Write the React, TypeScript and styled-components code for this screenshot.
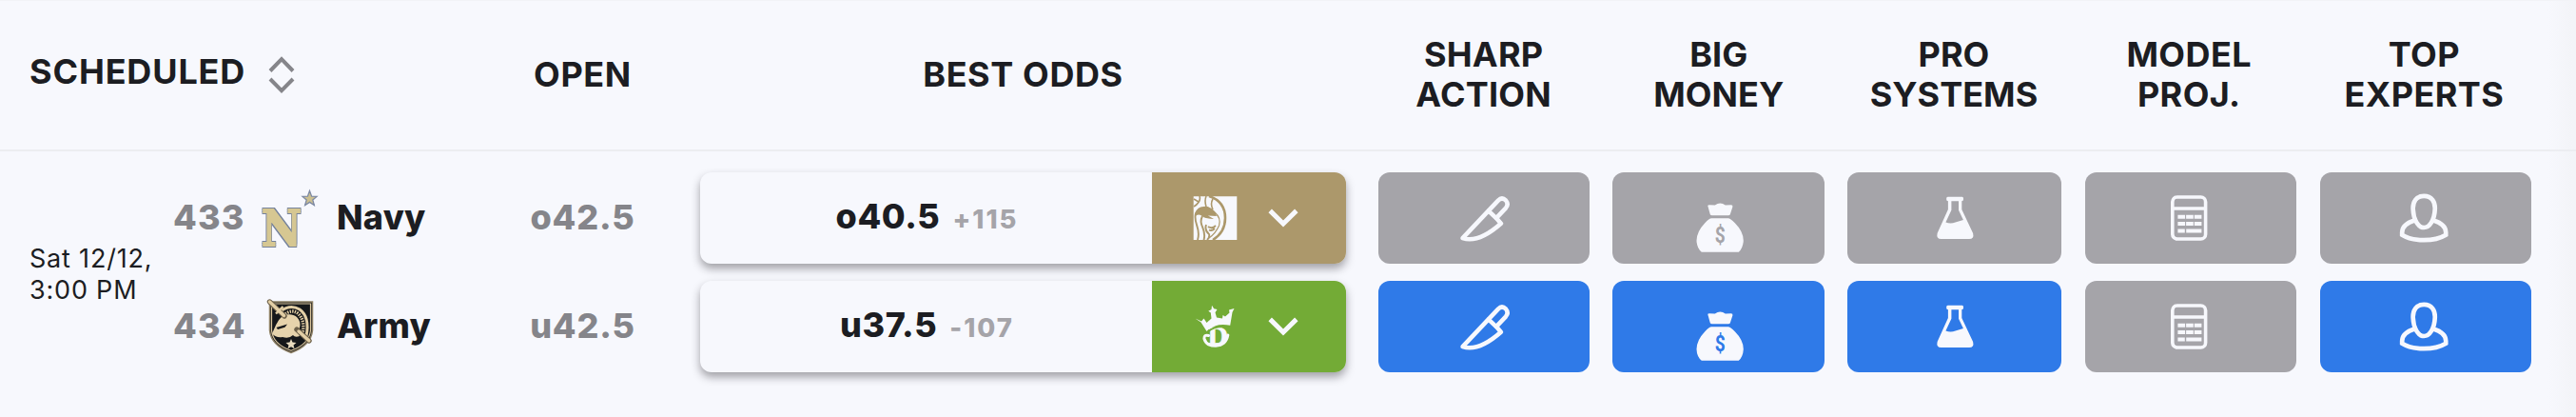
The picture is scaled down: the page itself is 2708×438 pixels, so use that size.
import React from "react";
import styled, { createGlobalStyle } from "styled-components";

const ink = "#1c1d22";
const surface = "#f7f8fd";
const muted = "#a5a4a9";
const blue = "#2f7ae8";
const bookGold = "#ac986b";
const bookGreen = "#73ab36";
const headerColumns = "183px 327px 205px 721px repeat(5, 247.2px) 1fr";
const bodyColumns = "183px 327px 205px 721px 246.8px 246.9px 249.4px 247px 247px 1fr";

const GlobalStyle = createGlobalStyle`
  * { box-sizing: border-box; }
  body {
    margin: 0;
    background: ${surface};
    font-family: Inter, "Liberation Sans", sans-serif;
    color: ${ink};
  }
  svg { display: block; flex: none; overflow: visible; }
`;

const Page = styled.main`
  width: 2708px;
  height: 438px;
  overflow: hidden;
  border-top: 1px solid #f2f3f7;
  background: linear-gradient(90deg, ${surface} 2678px, #f3f4f8 2704px);
`;

const HeaderRow = styled.header`
  display: grid;
  grid-template-columns: ${headerColumns};
  align-items: center;
  height: 158px;
  padding-bottom: 2px;
  border-bottom: 2px solid #ecedf1;
`;

const HeaderCell = styled.div<{ $spacing?: number }>`
  text-align: center;
  font-size: 36px;
  font-weight: 700;
  line-height: 42px;
  letter-spacing: ${(p) => p.$spacing ?? 0.6}px;
  white-space: pre-line;
`;

const ScheduledCell = styled(HeaderCell)`
  grid-column: span 2;
  display: flex;
  align-items: center;
  gap: 24px;
  padding: 0 0 6px 31px;
`;

const SortIconBox = styled.span`
  margin-top: 6px;
`;

const Body = styled.section`
  display: grid;
  grid-template-columns: ${bodyColumns};
  grid-template-rows: 95.5px 96px;
  row-gap: 18.5px;
  align-items: center;
  padding-top: 22px;
`;

const Time = styled.div`
  grid-row: span 2;
  grid-column: 1;
  padding: 3px 0 0 31px;
  font-size: 27px;
  line-height: 33px;
  letter-spacing: 0.8px;
  white-space: pre;
`;

const Team = styled.div`
  grid-column: 2;
  display: flex;
  align-items: center;
  font-size: 36px;
  font-weight: 800;
`;

const Rotation = styled.span`
  width: 90px;
  margin-left: -1px;
  padding-bottom: 2px;
  color: #85858a;
  letter-spacing: 1.1px;
`;

const LogoBox = styled.span`
  width: 82px;
`;

const TeamName = styled.span`
  padding-bottom: 2px;
  letter-spacing: 0.3px;
`;

const OpenLine = styled.div`
  padding-bottom: 2px;
  text-align: center;
  font-size: 36px;
  font-weight: 800;
  color: #85858a;
  letter-spacing: 0.8px;
`;

const OddsBox = styled.div`
  display: flex;
  height: 100%;
  margin: 0 21px;
  border-radius: 12px;
  overflow: hidden;
  background: ${surface};
  box-shadow: 0 5px 10px rgba(30, 28, 36, 0.4);
`;

const OddsValue = styled.div`
  flex: 1;
  display: flex;
  align-items: baseline;
  justify-content: center;
  gap: 13px;
  padding-left: 2px;
  line-height: 93px;
`;

const Line = styled.span`
  font-size: 36px;
  font-weight: 800;
  letter-spacing: 0.6px;
`;

const Price = styled.span`
  font-size: 27.5px;
  font-weight: 800;
  letter-spacing: 2px;
  color: ${muted};
`;

const Book = styled.div<{ $color: string }>`
  width: 204px;
  display: flex;
  align-items: center;
  gap: 32px;
  padding-left: 43px;
  background: ${(p) => p.$color};
`;

const Signal = styled.div<{ $active: boolean }>`
  display: flex;
  align-items: center;
  justify-content: center;
  height: 100%;
  margin: 0 12px 0 12.6px;
  border-radius: 12px;
  background: ${(p) => (p.$active ? blue : muted)};
`;

const NavyBox = styled.span`
  display: grid;
  width: 66px;
  height: 64px;

  > * {
    grid-area: 1 / 1;
  }
`;

const NavyLetter = styled.span`
  align-self: end;
  justify-self: start;
  margin: 0 0 -9px 3px;
  font: 700 52px / 60px "DejaVu Serif", serif;
  color: #d6c792;
  -webkit-text-stroke: 2px #d6c792;
  text-shadow: 1.8px 0 #75829c, -1.8px 0 #75829c, 0 1.8px #75829c, 0 -1.8px #75829c, 1.8px 1.8px #75829c,
    -1.8px -1.8px #75829c, 1.8px -1.8px #75829c, -1.8px 1.8px #75829c;
  transform: scaleX(0.88);
  transform-origin: 0 50%;
`;

const SortIcon = () => (
  <svg width="28" height="40" viewBox="0 0 28 40" fill="none" stroke="#85858a" strokeWidth="4">
    <path d="M2 16.5 14 4.2 26 16.5M2 25 14 37.2 26 25" />
  </svg>
);

const ChevronIcon = () => (
  <svg width="32" height="20" viewBox="0 0 32 20" fill="none" stroke={surface} strokeWidth="5">
    <path d="M2.2 2.4 16 16 29.8 2.4" />
  </svg>
);

const NavyLogo = () => (
  <NavyBox>
    <NavyLetter>N</NavyLetter>
    <svg width="66" height="64" viewBox="0 0 66 64">
      <path
        d="M53.5 3.5 55.6 9.2 61 9.4 56.8 13 58.3 18.6 53.5 15.4 48.7 18.6 50.2 13 46 9.4 51.4 9.2Z"
        fill="#cbbf91"
        stroke="#7d89a3"
        strokeWidth="1.3"
      />
    </svg>
  </NavyBox>
);

const ArmyLogo = () => (
  <svg width="66" height="60" viewBox="0 0 66 60">
    <path d="M11.5 4H56.5V34Q55 50 34 57.5 13 50 11.5 34Z" fill="#15171a" stroke="#8f8165" strokeWidth="1.5" />
    <path d="M13.5 6H54.5V34Q53 48.5 34 55.3 15 48.5 13.5 34Z" fill="none" stroke="#dcc79e" strokeWidth="1.2" />
    <path d="M23 14Q33 6 43 12 54 20 50 40" fill="none" stroke="#e3cfa6" strokeWidth="3" />
    <path d="M26 18.5Q34 11 41 16 49 23 46 37" fill="none" stroke="#e3cfa6" strokeWidth="3.4" strokeDasharray="1.4 1.2" />
    <path
      d="M14 37.5C17 31 18 28 20 25 24 17 34 15 40 20 45 25 44 31 41 36L43 40Q38 42 36 39 32 43 25 41 18 42 14 37.5Z"
      fill="#e6d3ac"
    />
    <path d="M18.5 31 30 27.5 27.5 30.8 20 33Z" fill="#15171a" />
    <path d="M11.5 4 27 19M40 33 53 45" stroke="#6c604a" strokeWidth="5.4" strokeLinecap="round" />
    <path d="M11.5 4 26.5 18.5M42 35 52.8 44.8" stroke="#e3cfa6" strokeWidth="3.4" strokeLinecap="round" />
    <path d="M18 16.5 25.5 9" stroke="#e3cfa6" strokeWidth="2.4" />
    <path d="M34 43 35.5 46.6 39.5 47 36.5 49.5 37.5 53.2 34 51.2 30.5 53.2 31.5 49.5 28.5 47 32.5 46.6Z" fill="#e9dcc0" />
  </svg>
);

const LionIcon = () => (
  <svg width="47" height="46" viewBox="0 0 47 46">
    <path d="M.7.2H46.3V46H.7Z" fill={surface} />
    <path d="M2 18Q5 11 11 11 18 10 23 16L25 21 16 20.5 22 24Q13 24 9 20.5 5 18 2 22Z" fill={bookGold} />
    <g fill="none" stroke={bookGold} strokeLinecap="butt">
      <path d="M17 0C29 4 34 13 34 23 34 33 29 41 21 46" strokeWidth="2.6" />
      <path d="M7 0Q9 6 1 11M14 0Q12 5 14 11M21 3Q18 8 21 14M1 3 6 6" strokeWidth="1.6" />
      <path d="M3 18C0 29 9 33 5 46M10 21C5 31 15 34 11.5 46M14 30Q12 36 17 40 18 43 15 46" strokeWidth="1.9" />
      <path d="M23 17Q30 23 27.5 31 24 39 17 44" strokeWidth="1.2" />
      <path d="M16 32Q20 35 24 31M17 35.5Q20 37 23 34" strokeWidth="1.8" />
    </g>
  </svg>
);

const CrownIcon = () => (
  <svg width="47" height="46" viewBox="0 0 47 46">
    <text
      x="15.5"
      y="41.5"
      fontFamily="Liberation Serif"
      fontWeight="700"
      fontSize="28"
      textLength="21.5"
      lengthAdjust="spacingAndGlyphs"
      fill={surface}
      stroke={surface}
      strokeWidth="0.7"
    >
      D
    </text>
    <path
      d="M16.5 32.5Q11.5 31 12 36 14 43.2 24 43.2 35 42.5 36.8 32"
      fill="none"
      stroke={surface}
      strokeWidth="3"
      strokeLinecap="round"
    />
    <path d="M15 29Q23 21.5 38.5 23.5" fill="none" stroke={bookGreen} strokeWidth="2" />
    <path
      d="M2.5 14.5 9 17.5 11.5 14.5 14.5 19 19.5 14.5 18.8 8.5 16.3 6.8 19.5 5 20 .8 22.2 4.3 25.5 5 23.5 8.2 25 13.5 31 14.5 31.5 11 34 12.5 38.5 8.5 38 5.5 43.5 4 41.5 8 39.2 21.8Q24 18.5 14.5 28L8.5 18.5Z"
      fill={surface}
    />
  </svg>
);

const KnifeIcon = () => (
  <svg
    width="54"
    height="50"
    viewBox="-1.4 -0.6 54 50"
    fill="none"
    stroke={surface}
    strokeWidth="4.6"
    strokeLinecap="round"
    strokeLinejoin="round"
  >
    <path d="M3.2 45.5 40.5 6Q44.5 2 48.5 5.8 52 10 48.5 14L38.5 24.5 43.5 30.2Q20 51 3.2 45.5Z" />
    <path d="M30.5 17 38.5 24.5" />
  </svg>
);

const BagIcon = ({ ground }: { ground: string }) => (
  <svg width="54" height="74" viewBox="-0.8 1.3 54 74">
    <g fill={surface}>
      <path d="M14.5 25.5Q14.5 24.5 16 24.5L22 24.8Q27.5 21 33 24.8L39 24.5Q41 24.5 40.6 26.5L38 34.5Q37.7 35.5 36 35.5H19Q17.5 35.5 17 34.5Z" />
      <path d="M18.5 38.5H36Q38 38.5 43 43.5 52 52.5 52 62 51.5 70 47 74H8Q3 70 2.7 62 2.8 52.5 11.5 43.5 16 38.5 18.5 38.5Z" />
    </g>
    <text
      x="27.4"
      y="64.5"
      textAnchor="middle"
      fontFamily="Roboto"
      fontWeight="700"
      fontSize="23"
      textLength="11"
      lengthAdjust="spacingAndGlyphs"
      fill={ground}
    >
      $
    </text>
  </svg>
);

const FlaskIcon = () => (
  <svg width="40" height="46" viewBox="-0.6 0 40 46">
    <path
      fillRule="evenodd"
      fill={surface}
      d="M12 .8H27Q28.5.8 28.5 3T26.7 5.2V14L38.5 39Q40 45 34.5 45H5Q-.3 45 1 39L12.3 14V5.2Q10.5 5.2 10.5 3T12 .8ZM15.8 5.2V14.8L9.8 27.5Q15 29.3 20 27.5L28.3 25.1 23.4 14.8V5.2Z"
    />
  </svg>
);

const CalculatorIcon = () => (
  <svg width="40" height="48" viewBox="1.6 0 40 48">
    <g fill="none" stroke={surface}>
      <rect x="2.4" y="2" width="34.8" height="44" rx="5" strokeWidth="3.6" />
      <path d="M2 14H38" strokeWidth="3.4" />
      <path d="M8 22.7H33M8 30H33" strokeWidth="4" strokeDasharray="7.7 1" />
      <path d="M8 37.5H15.4M16.8 37.5H33" strokeWidth="4" />
    </g>
  </svg>
);

const ExpertIcon = () => (
  <svg width="52" height="52" viewBox="1.8 0 52 52" fill="none" stroke={surface} strokeWidth="4.7">
    <path d="M26 2.8C34 2.8 38 9 37.5 17 37 28 32 36 26 36 20 36 15 28 14.5 17 14 9 18 2.8 26 2.8Z" />
    <path d="M16 28.5Q3.2 32.5 3 41V43.7Q12 49.2 26 49.2T49 43.7V41Q48.8 32.5 36 28.5" />
  </svg>
);

const signals = [
  { title: "SHARP\nACTION", spacing: 0.2, icon: () => <KnifeIcon /> },
  { title: "BIG\nMONEY", spacing: 0, icon: (ground: string) => <BagIcon ground={ground} /> },
  { title: "PRO\nSYSTEMS", spacing: 0, icon: () => <FlaskIcon /> },
  { title: "MODEL\nPROJ.", spacing: 0.4, icon: () => <CalculatorIcon /> },
  { title: "TOP\nEXPERTS", spacing: 0.4, icon: () => <ExpertIcon /> },
];

const teams = [
  {
    id: "433",
    name: "Navy",
    logo: <NavyLogo />,
    open: "o42.5",
    line: "o40.5",
    price: "+115",
    book: bookGold,
    bookIcon: <LionIcon />,
    active: [false, false, false, false, false],
  },
  {
    id: "434",
    name: "Army",
    logo: <ArmyLogo />,
    open: "u42.5",
    line: "u37.5",
    price: "-107",
    book: bookGreen,
    bookIcon: <CrownIcon />,
    active: [true, true, true, false, true],
  },
];

export default function App() {
  return (
    <Page>
      <GlobalStyle />
      <HeaderRow>
        <ScheduledCell $spacing={0.85}>
          SCHEDULED
          <SortIconBox>
            <SortIcon />
          </SortIconBox>
        </ScheduledCell>
        <HeaderCell>OPEN</HeaderCell>
        <HeaderCell>BEST ODDS</HeaderCell>
        {signals.map((s) => (
          <HeaderCell key={s.title} $spacing={s.spacing}>
            {s.title}
          </HeaderCell>
        ))}
      </HeaderRow>
      <Body>
        <Time>{"Sat 12/12,\n3:00 PM"}</Time>
        {teams.map((t) => (
          <React.Fragment key={t.id}>
            <Team>
              <Rotation>{t.id}</Rotation>
              <LogoBox>{t.logo}</LogoBox>
              <TeamName>{t.name}</TeamName>
            </Team>
            <OpenLine>{t.open}</OpenLine>
            <OddsBox>
              <OddsValue>
                <Line>{t.line}</Line>
                <Price>{t.price}</Price>
              </OddsValue>
              <Book $color={t.book}>
                {t.bookIcon}
                <ChevronIcon />
              </Book>
            </OddsBox>
            {signals.map((s, i) => (
              <Signal key={s.title} $active={t.active[i]}>
                {s.icon(t.active[i] ? blue : muted)}
              </Signal>
            ))}
            <span />
          </React.Fragment>
        ))}
      </Body>
    </Page>
  );
}
